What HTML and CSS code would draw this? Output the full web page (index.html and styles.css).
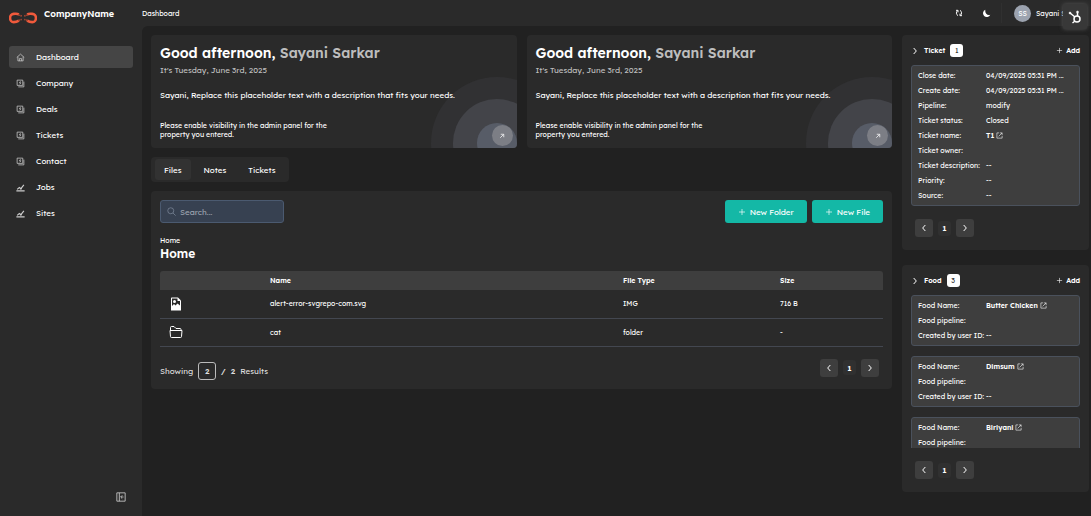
FILE: index.html
```html
<!DOCTYPE html>
<html lang="en">
<head>
    <meta charset="UTF-8">
    <meta name="viewport" content="width=device-width, initial-scale=1.0">
    <title>Dashboard</title>
    <link rel="stylesheet" href="styles.css">
</head>
<body>
    <!-- shared icons -->
    <svg class="sprite" aria-hidden="true">
        <symbol id="i-home" viewBox="0 0 24 24"><path d="M2 12 12 3l10 9M5 10v11h14V10M9 21v-6h6v6" fill="none" stroke="currentColor" stroke-width="2"/></symbol>
        <symbol id="i-record" viewBox="0 0 24 24"><path d="M6 21h15V7M3 17V3h15v14zM12 6l-3 4h4l-3 4" fill="none" stroke="currentColor" stroke-width="2"/></symbol>
        <symbol id="i-chart" viewBox="0 0 24 24"><path d="M1 21h22M3 17l6-5 4 3 8-10" fill="none" stroke="currentColor" stroke-width="3"/><circle cx="13" cy="15" r="2.500" fill="currentColor"/></symbol>
        <symbol id="i-left" viewBox="0 0 24 24"><path d="m16 3-8 9 8 9" fill="none" stroke="currentColor" stroke-width="3"/></symbol>
        <symbol id="i-right" viewBox="0 0 24 24"><path d="m8 3 8 9-8 9" fill="none" stroke="currentColor" stroke-width="3"/></symbol>
        <symbol id="i-plus" viewBox="0 0 24 24"><path d="M12 3v18M3 12h18" fill="none" stroke="currentColor" stroke-width="2"/></symbol>
        <symbol id="i-open" viewBox="0 0 24 24"><path d="M11 3H3v18h18v-8M14 3h7v7M21 3 9 15" fill="none" stroke="currentColor" stroke-width="2"/></symbol>
        <symbol id="i-circles" viewBox="0 0 86 72"><circle cx="66" cy="67" r="66" fill="#313133"/><circle cx="66" cy="67" r="44" fill="#434449"/><circle cx="66" cy="67" r="20" fill="#575c67"/></symbol>
        <symbol id="i-arrow" viewBox="0 0 24 24"><path d="M5 19 18 6M7 5h12v12" fill="none" stroke="currentColor" stroke-width="3"/></symbol>
    </svg>

    <div class="app">
        <aside class="sidebar">
            <div class="brand">
                <svg class="logo" viewBox="0 0 54 22" aria-hidden="true">
                    <path d="M19 4C15 2 13 3 9 3a7 8 0 0 0 0 16c4 0 7-1 10-3M35 4c4-2 6-1 10-1a7 8 0 0 1 0 16c-4 0-7-1-10-3" fill="none" stroke="#f05a3c" stroke-width="5"/>
                    <path d="M18 5q4 1 7 3M36 5q-4 1-7 3M18 16q4-2 7-2M36 16q-4-2-7-2" fill="none" stroke="#a94632" stroke-width="3" stroke-dasharray="3 1"/>
                </svg>
                <strong>CompanyName</strong>
            </div>
            <nav class="menu">
                <a class="active" href="#"><svg><use href="#i-home"/></svg>Dashboard</a>
                <a href="#"><svg><use href="#i-record"/></svg>Company</a>
                <a href="#"><svg><use href="#i-record"/></svg>Deals</a>
                <a href="#"><svg><use href="#i-record"/></svg>Tickets</a>
                <a href="#"><svg><use href="#i-record"/></svg>Contact</a>
                <a href="#"><svg><use href="#i-chart"/></svg>Jobs</a>
                <a href="#"><svg><use href="#i-chart"/></svg>Sites</a>
            </nav>
            <button class="collapse" aria-label="Collapse sidebar">
                <svg viewBox="0 0 24 24"><path d="M2 2h20v20H2zM8 2v20M18 12h-6M15 8l-4 4 4 4" fill="none" stroke="currentColor" stroke-width="2"/></svg>
            </button>
        </aside>

        <div class="page">
            <header class="topbar">
                <span class="crumb">Dashboard</span>
                <button class="icon-btn" aria-label="Refresh">
                    <svg viewBox="0 0 24 24"><path d="M9 20C3 17 3 8 8 5M3 4h6v6M15 4c6 3 6 12 1 15M21 20h-6v-6" fill="none" stroke="currentColor" stroke-width="3"/></svg>
                </button>
                <button class="icon-btn moon" aria-label="Dark mode">
                    <svg viewBox="0 0 24 24"><path d="M9 2a10 10 0 1 0 13 13C14 18 7 11 9 2z" fill="currentColor"/></svg>
                </button>
                <div class="user">
                    <span class="avatar">SS</span>
                    <span>Sayani Sarkar</span>
                </div>
                <button class="hubspot" aria-label="HubSpot">
                    <svg viewBox="0 0 28 28" fill="none" stroke="currentColor">
                        <circle cx="18" cy="18" r="6" stroke-width="3"/>
                        <path d="M19 12V5M14 14 4 6M14 22l-5 4" stroke-width="3"/>
                        <circle cx="19" cy="4" r="2" fill="currentColor"/><circle cx="4" cy="6" r="2" fill="currentColor"/>
                    </svg>
                </button>
            </header>

            <div class="content">
                <main class="main">
                    <div class="banners">
                        <section class="banner">
                            <svg class="circles"><use href="#i-circles"/></svg>
                            <h1>Good afternoon, <span>Sayani Sarkar</span></h1>
                            <p class="date">It's Tuesday, June 3rd, 2025</p>
                            <p class="lead">Sayani, Replace this placeholder text with a description that fits your needs.</p>
                            <p class="note">Please enable visibility in the admin panel for the property you entered.</p>
                            <button class="go" aria-label="Open"><svg><use href="#i-arrow"/></svg></button>
                        </section>
                        <section class="banner">
                            <svg class="circles"><use href="#i-circles"/></svg>
                            <h1>Good afternoon, <span>Sayani Sarkar</span></h1>
                            <p class="date">It's Tuesday, June 3rd, 2025</p>
                            <p class="lead">Sayani, Replace this placeholder text with a description that fits your needs.</p>
                            <p class="note">Please enable visibility in the admin panel for the property you entered.</p>
                            <button class="go" aria-label="Open"><svg><use href="#i-arrow"/></svg></button>
                        </section>
                    </div>

                    <div class="tabs">
                        <button class="active">Files</button>
                        <button>Notes</button>
                        <button>Tickets</button>
                    </div>

                    <section class="files">
                        <div class="toolbar">
                            <label class="search">
                                <svg viewBox="0 0 24 24"><circle cx="10" cy="10" r="8" fill="none" stroke="currentColor" stroke-width="2"/><path d="m16 16 7 7" stroke="currentColor" stroke-width="2"/></svg>
                                <input type="text" placeholder="Search..." aria-label="Search">
                            </label>
                            <button class="primary"><svg><use href="#i-plus"/></svg>New Folder</button>
                            <button class="primary"><svg><use href="#i-plus"/></svg>New File</button>
                        </div>
                        <a class="path" href="#">Home</a>
                        <h2>Home</h2>
                        <table>
                            <thead>
                                <tr><th class="col-icon"></th><th>Name</th><th class="col-type">File Type</th><th class="col-size">Size</th></tr>
                            </thead>
                            <tbody>
                                <tr>
                                    <td><svg class="file-icon" viewBox="0 0 24 28"><path d="M3 1h13l6 6v20H2V2z" fill="#fff"/><path d="M4 3h11v5h5v9l-5-4-4 4-3-3-4 4z" fill="#2a2a2a"/><circle cx="9" cy="9" r="3" fill="#fff"/></svg></td>
                                    <td>alert-error-svgrepo-com.svg</td><td>IMG</td><td>716 B</td>
                                </tr>
                                <tr>
                                    <td><svg class="file-icon" viewBox="0 0 28 28"><path d="M3 11V5q0-2 2-2h5l4 4h8q2 0 2 2v2M2 11h24l-1 12q0 2-2 2H5q-2 0-2-2z" fill="none" stroke="#fff" stroke-width="2"/></svg></td>
                                    <td>cat</td><td>folder</td><td>-</td>
                                </tr>
                            </tbody>
                        </table>
                        <div class="table-footer">
                            <div class="showing">
                                <label for="per-page">Showing</label>
                                <input type="text" id="per-page" value="2">
                                <strong>/</strong>
                                <strong>2</strong>
                                <span>Results</span>
                            </div>
                            <div class="pager">
                                <button aria-label="Previous"><svg><use href="#i-left"/></svg></button>
                                <button class="num">1</button>
                                <button aria-label="Next"><svg><use href="#i-right"/></svg></button>
                            </div>
                        </div>
                    </section>
                </main>

                <aside class="side">
                    <section class="panel">
                        <div class="panel-head">
                            <svg><use href="#i-right"/></svg>
                            <h3>Ticket</h3>
                            <span class="badge">1</span>
                            <button class="add"><svg><use href="#i-plus"/></svg>Add</button>
                        </div>
                        <div class="records">
                            <dl class="record">
                                <dt>Close date:</dt><dd>04/09/2025 05:31 PM ...</dd>
                                <dt>Create date:</dt><dd>04/09/2025 05:31 PM ...</dd>
                                <dt>Pipeline:</dt><dd>modify</dd>
                                <dt>Ticket status:</dt><dd>Closed</dd>
                                <dt>Ticket name:</dt><dd><a href="#">T1<svg><use href="#i-open"/></svg></a></dd>
                                <dt>Ticket owner:</dt><dd></dd>
                                <dt>Ticket description:</dt><dd>--</dd>
                                <dt>Priority:</dt><dd>--</dd>
                                <dt>Source:</dt><dd>--</dd>
                            </dl>
                        </div>
                        <div class="pager">
                            <button aria-label="Previous"><svg><use href="#i-left"/></svg></button>
                            <button class="num">1</button>
                            <button aria-label="Next"><svg><use href="#i-right"/></svg></button>
                        </div>
                    </section>

                    <section class="panel">
                        <div class="panel-head">
                            <svg><use href="#i-right"/></svg>
                            <h3>Food</h3>
                            <span class="badge">3</span>
                            <button class="add"><svg><use href="#i-plus"/></svg>Add</button>
                        </div>
                        <div class="records">
                            <dl class="record">
                                <dt>Food Name:</dt><dd><a href="#">Butter Chicken<svg><use href="#i-open"/></svg></a></dd>
                                <dt>Food pipeline:</dt><dd></dd>
                                <dt>Created by user ID:</dt><dd>--</dd>
                            </dl>
                            <dl class="record">
                                <dt>Food Name:</dt><dd><a href="#">Dimsum<svg><use href="#i-open"/></svg></a></dd>
                                <dt>Food pipeline:</dt><dd></dd>
                                <dt>Created by user ID:</dt><dd>--</dd>
                            </dl>
                            <dl class="record">
                                <dt>Food Name:</dt><dd><a href="#">Biriyani<svg><use href="#i-open"/></svg></a></dd>
                                <dt>Food pipeline:</dt><dd></dd>
                            </dl>
                        </div>
                        <div class="pager">
                            <button aria-label="Previous"><svg><use href="#i-left"/></svg></button>
                            <button class="num">1</button>
                            <button aria-label="Next"><svg><use href="#i-right"/></svg></button>
                        </div>
                    </section>
                </aside>
            </div>
        </div>
    </div>
</body>
</html>
```
FILE: styles.css
```css
* {
    box-sizing: border-box;
}
body {
    margin: 0;
    background-color: #2a2a2a;
    color: #fff;
    font-family: "Lexend", "Inter", sans-serif;
    font-size: 7px;
    font-weight: 400;
}
button, input {
    font: inherit;
    color: inherit;
    border: none;
    background: none;
    padding: 0;
    margin: 0;
}
button {
    display: flex;
    align-items: center;
    justify-content: center;
    cursor: pointer;
}
a {
    color: inherit;
    text-decoration: none;
}
h1, h2, h3, p, dl, dd {
    margin: 0;
}
strong {
    font-weight: 600;
}
svg {
    display: block;
    flex-shrink: 0;
    width: 8px;
    height: 8px;
}
.sprite {
    display: none;
}
.app {
    display: flex;
    min-height: 100vh;
}

/* Sidebar */
.sidebar {
    display: flex;
    flex-direction: column;
    width: 142px;
    flex-shrink: 0;
    padding: 8px 9px 14px;
}
.brand {
    display: flex;
    gap: 7px;
    height: 38px;
    font-size: 9px;
    line-height: 12px;
}
.logo {
    width: 28px;
    height: 12px;
    margin-top: 4px;
}
.menu {
    display: flex;
    flex-direction: column;
    gap: 4px;
}
.menu a {
    display: flex;
    align-items: center;
    gap: 11px;
    height: 22px;
    padding-left: 7px;
    border-radius: 3px;
    font-size: 8px;
}
.menu svg {
    width: 9px;
    height: 9px;
    color: #ccc;
}
.menu .active {
    background-color: #454545;
}
.collapse {
    margin: auto 7px 0 auto;
    color: #ccc;
}
.collapse svg {
    width: 10px;
    height: 10px;
}

/* Top bar */
.page {
    flex: 1;
    min-width: 0;
    display: flex;
    flex-direction: column;
}
.topbar {
    display: flex;
    align-items: center;
    height: 26px;
    position: relative;
}
.crumb {
    margin-right: auto;
}
.icon-btn {
    width: 27px;
    height: 20px;
}
.moon {
    width: 30px;
    border-right: 1px solid #303030;
}
.moon svg {
    width: 9px;
    height: 9px;
}
.user {
    display: flex;
    align-items: center;
    gap: 5px;
    width: 77px;
    margin-left: 12px;
    white-space: nowrap;
    overflow: hidden;
}
.avatar {
    display: flex;
    align-items: center;
    justify-content: center;
    width: 17px;
    height: 17px;
    border-radius: 50%;
    background-color: #9ca3af;
    flex-shrink: 0;
}
.hubspot {
    position: absolute; /* floats over the user name */
    top: 4px;
    right: 4px;
    width: 24px;
    height: 25px;
    background-color: #383838;
    border-radius: 2px;
    box-shadow: 0 0 4px #555;
    z-index: 1;
}
.hubspot svg {
    width: 14px;
    height: 14px;
}

/* Content */
.content {
    flex: 1;
    display: flex;
    align-items: flex-start;
    gap: 10px;
    padding: 9px 2px 9px 9px;
    background-color: #212121;
    border-top-left-radius: 6px;
}
.main {
    flex: 1;
    min-width: 0;
}
.banners {
    display: grid;
    grid-template-columns: 1fr 1fr;
    gap: 10px;
}
.banner {
    position: relative;
    z-index: 0;
    overflow: hidden;
    min-height: 113px;
    padding: 9px;
    background-color: #2a2a2a;
    border-radius: 4px;
}
.banner h1 {
    font-size: 14px;
    line-height: 18px;
    font-weight: 600;
}
.banner h1 span {
    color: #bdbdbd;
}
.date {
    margin-top: 2px;
    font-size: 8px;
    line-height: 12px;
    color: #bdbdbd;
}
.lead {
    margin-top: 13px;
    font-size: 8px;
    line-height: 12px;
}
.note {
    width: 50%;
    margin-top: 20px;
    line-height: 9px;
}
.circles {
    position: absolute; /* decoration behind the text */
    right: 0;
    bottom: 0;
    z-index: -1;
    width: 86px;
    height: 72px;
}
.go {
    position: absolute;
    right: 4px;
    bottom: 2px;
    width: 21px;
    height: 21px;
    border-radius: 50%;
    background-color: #7c7e85;
}
.go svg {
    width: 6px;
    height: 6px;
}
.tabs {
    display: inline-flex;
    gap: 4px;
    margin: 9px 0;
    padding: 2px 4px;
    background-color: #2a2a2a;
    border-radius: 4px;
    font-size: 8px;
    vertical-align: top;
}
.tabs button {
    height: 21px;
    padding: 0 9px;
    border-radius: 3px;
}
.tabs .active {
    background-color: #323232;
}

/* Files */
.files {
    padding: 9px;
    background-color: #2a2a2a;
    border-radius: 4px;
}
.toolbar {
    display: flex;
    gap: 5px;
    font-size: 8px;
}
.search {
    display: flex;
    align-items: center;
    gap: 4px;
    width: 124px;
    height: 23px;
    margin-right: auto;
    padding: 0 6px;
    border: 1px solid #4b5a70;
    border-radius: 3px;
    background-color: #374151;
    color: #7b8798;
}
.search svg {
    width: 9px;
    height: 9px;
}
.search input {
    width: 100%;
    outline: none;
    color: #fff;
}
.search input::placeholder {
    color: #9ca3af;
}
.primary {
    gap: 4px;
    height: 23px;
    padding: 0 13px;
    border-radius: 3px;
    background-color: #14b8a6;
}
.path {
    display: block;
    margin-top: 13px;
    line-height: 10px;
}
.files h2 {
    font-size: 12px;
    line-height: 16px;
    font-weight: 600;
}
table {
    width: 100%;
    margin-top: 9px;
    border-collapse: collapse;
    table-layout: fixed;
    text-align: left;
}
th {
    height: 19px;
    padding: 0;
    background-color: #3e3e3e;
    font-weight: 600;
}
th:first-child {
    border-top-left-radius: 3px;
}
th:last-child {
    border-top-right-radius: 3px;
}
td {
    height: 28px;
    padding: 0;
    border-bottom: 1px solid #434750;
}
.col-icon {
    width: 110px;
}
.col-type {
    width: 157px;
}
.col-size {
    width: 103px;
}
.file-icon {
    width: 14px;
    height: 14px;
    margin-left: 9px;
}
.table-footer {
    display: flex;
    align-items: flex-start;
    justify-content: space-between;
    margin-top: 12px;
}
.showing {
    display: flex;
    align-items: center;
    gap: 5px;
    padding-top: 3px;
    font-size: 8px;
    color: #ddd;
}
.showing input {
    width: 18px;
    height: 18px;
    border: 1px solid #bbb;
    border-radius: 3px;
    text-align: center;
    font-weight: 600;
}
.pager {
    display: flex;
    align-items: center;
    gap: 5px;
    padding: 0 4px;
    font-size: 8px;
}
.pager button {
    width: 18px;
    height: 18px;
    border-radius: 3px;
    background-color: #3e3e3e;
}
.pager .num {
    width: 13px;
    height: 15px;
    background-color: #303030;
    font-weight: 600;
}

/* Right column */
.side {
    display: flex;
    flex-direction: column;
    gap: 15px;
    width: 187px;
    flex-shrink: 0;
}
.panel {
    padding: 9px 9px 13px;
    background-color: #2a2a2a;
    border-radius: 4px;
}
.panel-head {
    display: flex;
    align-items: center;
    gap: 5px;
    height: 13px;
    margin-bottom: 8px;
}
.panel h3 {
    font-size: 7px;
    font-weight: 600;
}
.badge {
    width: 13px;
    line-height: 13px;
    text-align: center;
    background-color: #fff;
    color: #333;
    border-radius: 3px;
}
.add {
    gap: 3px;
    margin-left: auto;
    font-weight: 600;
}
.add svg {
    width: 7px;
    height: 7px;
}
.records {
    display: flex;
    flex-direction: column;
    gap: 10px;
    max-height: 153px;
    overflow: hidden;
}
.record {
    display: grid;
    grid-template-columns: 68px 1fr;
    grid-auto-rows: 15px;
    align-items: center;
    flex-shrink: 0;
    padding: 2px 6px;
    border: 1px solid #4a515c;
    border-radius: 3px;
    background-color: #3e3e3e;
    white-space: nowrap;
}
.record a {
    display: flex;
    align-items: center;
    gap: 2px;
    font-weight: 600;
}
.record svg {
    width: 7px;
    height: 7px;
}
.panel .pager {
    margin-top: 13px;
}
```
